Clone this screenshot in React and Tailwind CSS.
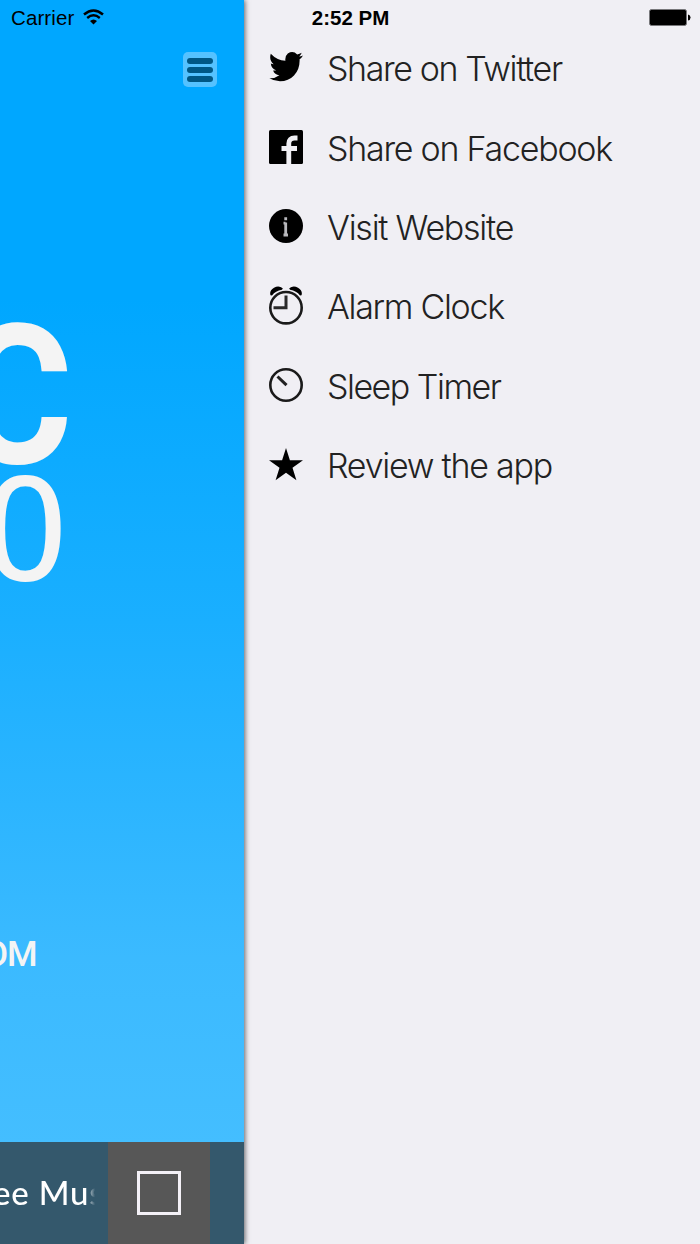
import React from 'react';

const TwitterIcon = () => (
  <svg width="34" height="30" viewBox="0 0 34 30" className="-mt-px">
    <path d="M1.8 1.8Q8 8.500 16.400 8.800Q15.800 4 18.800 1.500Q24-1.800 28.200 2.400Q30.500 1.800 32.700.8Q31.800 3 30.200 4.400Q32 4.200 34 3.400Q32.800 5.600 30.600 7.200Q31 17 25 23.400Q19.500 29.200 11 29.200Q5 29.200.4 26.300Q6 26.600 10.400 23.300Q5.600 22.800 4.100 18.500Q5.600 18.700 7.100 18.200Q2.300 16.800 1.800 11.500Q3.200 12.300 4.700 12.300Q-.3 8 1.800 1.800Z" fill="#000" />
  </svg>
);

const FacebookIcon = () => (
  <svg width="34" height="34" viewBox="0 0 34 34">
    <rect width="34" height="34" rx="1.5" fill="#000" />
    <path d="M28.500 8H25.500Q19.800 8 19.800 13.500V34M12.500 18.500H28" fill="none" stroke="#f0eff4" strokeWidth="4.800" />
  </svg>
);

const InfoIcon = () => (
  <svg width="34" height="34" viewBox="0 0 34 34">
    <circle cx="17" cy="17" r="17" fill="#000" />
    <path d="M16.700 8.300v3M16.700 13.500v13M14.500 14.200h2M14.500 26h4.500" stroke="#b9b9bd" strokeWidth="2.800" />
  </svg>
);

const AlarmIcon = () => (
  <svg width="34" height="39" viewBox="0 0 34 39">
    <path d="M1.500 9.200Q0 5 5 1.800Q9.500-1.200 13.800 2.200L13 3.800Q6.500 4.800 3 9.500ZM32.500 9.200Q34 5 29 1.800Q24.500-1.200 20.200 2.200L21 3.800Q27.500 4.800 31 9.500Z" fill="#000" />
    <circle cx="17" cy="21.700" r="15.700" fill="none" stroke="#1a1a1a" strokeWidth="2.600" />
    <path d="M17 9.500V21.800H4.500" fill="none" stroke="#2a2a2a" strokeWidth="3" />
  </svg>
);

const TimerIcon = () => (
  <svg width="34" height="34" viewBox="0 0 34 34">
    <circle cx="17" cy="17" r="15.700" fill="none" stroke="#1a1a1a" strokeWidth="2.600" />
    <path d="M8.500 8.500L17.500 17.200" stroke="#222" strokeWidth="3" />
  </svg>
);

const StarIcon = () => (
  <svg width="34" height="33" viewBox="0 0 34 33">
    <path d="M17 0L20.900 12.200H34L23.500 19.800L27.400 32.300L17 24.700L6.600 32.300L10.500 19.800L0 12.200H13.100Z" fill="#000" />
  </svg>
);

const menuItems = [
  { label: 'Share on Twitter', icon: <TwitterIcon />, tracking: 'tracking-[-1.4px]' },
  { label: 'Share on Facebook', icon: <FacebookIcon />, tracking: 'tracking-[-1.25px]' },
  { label: 'Visit Website', icon: <InfoIcon />, tracking: 'tracking-[-1.25px]' },
  { label: 'Alarm Clock', icon: <AlarmIcon />, tracking: 'tracking-[-1.3px]' },
  { label: 'Sleep Timer', icon: <TimerIcon />, tracking: 'tracking-[-1.5px]' },
  { label: 'Review the app', icon: <StarIcon />, tracking: 'tracking-[-1.25px]' },
];

function StatusBar() {
  return (
    <div className="absolute inset-x-0 top-0 z-20 grid h-9 grid-cols-3 items-center pr-[9px] pl-[10px] font-['Liberation_Sans',sans-serif] text-[20.5px] text-black">
      <div className="flex items-center gap-[9px] pl-px tracking-[0.1px]">
        <span>Carrier</span>
        <svg width="21" height="16" viewBox="0 0 21 16" className="-mt-[2px]">
          <path d="M1 5.500Q10.500-2.500 20 5.500" fill="none" stroke="#000" strokeWidth="2.500" />
          <path d="M4.200 9Q10.500 3.700 16.800 9" fill="none" stroke="#000" strokeWidth="2.400" />
          <path d="M7 12Q10.500 9 14 12L10.500 15.500Z" fill="#000" />
        </svg>
      </div>
      <span className="text-center font-bold">2:52 PM</span>
      <svg width="42" height="17" viewBox="0 0 42 17" className="-mt-px justify-self-end">
        <rect x=".5" y=".5" width="37" height="16" rx="2" fill="#000" stroke="#77777a" />
        <path d="M39 5.500Q41.500 6 41.500 8.500Q41.500 11 39 11.500Z" fill="#000" />
      </svg>
    </div>
  );
}

function Player() {
  return (
    <div className="z-10 flex h-full w-[244px] shrink-0 flex-col overflow-hidden bg-[linear-gradient(#00a7ff_0%,#00a7ff_24%,#1aafff_50%,#3bbaff_77%,#44beff_92%)]">
      <div className="flex h-[320px] shrink-0 justify-end pt-[52px] pr-[27px]">
        <button className="flex h-[35px] w-[34px] flex-col items-center justify-center gap-[3px] rounded-[5px] bg-[#55c2ff]">
          <span className="h-[6px] w-[26px] rounded-sm bg-[#005785]" />
          <span className="h-[6px] w-[26px] rounded-sm bg-[#005785]" />
          <span className="h-[6px] w-[26px] rounded-sm bg-[#005785]" />
        </button>
      </div>
      {/* Station logo */}
      <svg width="244" height="280" viewBox="0 320 244 280" fill="#f4f4f4" className="shrink-0">
        <text transform="translate(-41 462.500) scale(.895 1)" fontFamily="Roboto, sans-serif" fontWeight="700" fontSize="194">C</text>
        <text transform="translate(-18 580) scale(1.03 1)" fontFamily="'DejaVu Sans Mono', monospace" fontSize="140">O</text>
      </svg>
      <div className="grow pt-[334px]">
        <p className="-ml-[16px] font-['Roboto',sans-serif] text-[35px] leading-[42px] font-medium tracking-[-1px] text-[#f4f4f4]">OM</p>
      </div>
      <div className="flex h-[102px] shrink-0 bg-[#34586c]">
        <div className="flex w-[95px] items-center overflow-hidden whitespace-nowrap">
          <span className="-ml-[7px] font-['Lato',sans-serif] text-[33px] font-medium tracking-[0.8px] text-white [mask-image:linear-gradient(to_right,#000_93px,transparent_102px)]">ee Mus</span>
        </div>
        <button className="ml-[13px] flex w-[102px] items-center justify-center bg-[#575757]">
          <span className="size-[44px] border-3 border-[#f4f1f7]" />
        </button>
      </div>
    </div>
  );
}

function Menu() {
  return (
    <ul className="grow pt-[28px] pl-[25px]">
      {menuItems.map((item) => (
        <li key={item.label} className="flex h-[79.4px] items-center gap-[24px]">
          <span className="flex w-[34px] justify-center">{item.icon}</span>
          <span className={`pt-[3px] font-['Inter',sans-serif] text-[34px] leading-none font-light text-[#222] ${item.tracking}`}>
            {item.label}
          </span>
        </li>
      ))}
    </ul>
  );
}

export default function App() {
  return (
    <div className="relative flex h-[1244px] w-[700px] overflow-hidden bg-[#f0eff4]">
      <StatusBar />
      <div className="z-10 flex shadow-[1px_0_5px_rgba(0,0,0,0.6)]">
        <Player />
      </div>
      <Menu />
    </div>
  );
}
